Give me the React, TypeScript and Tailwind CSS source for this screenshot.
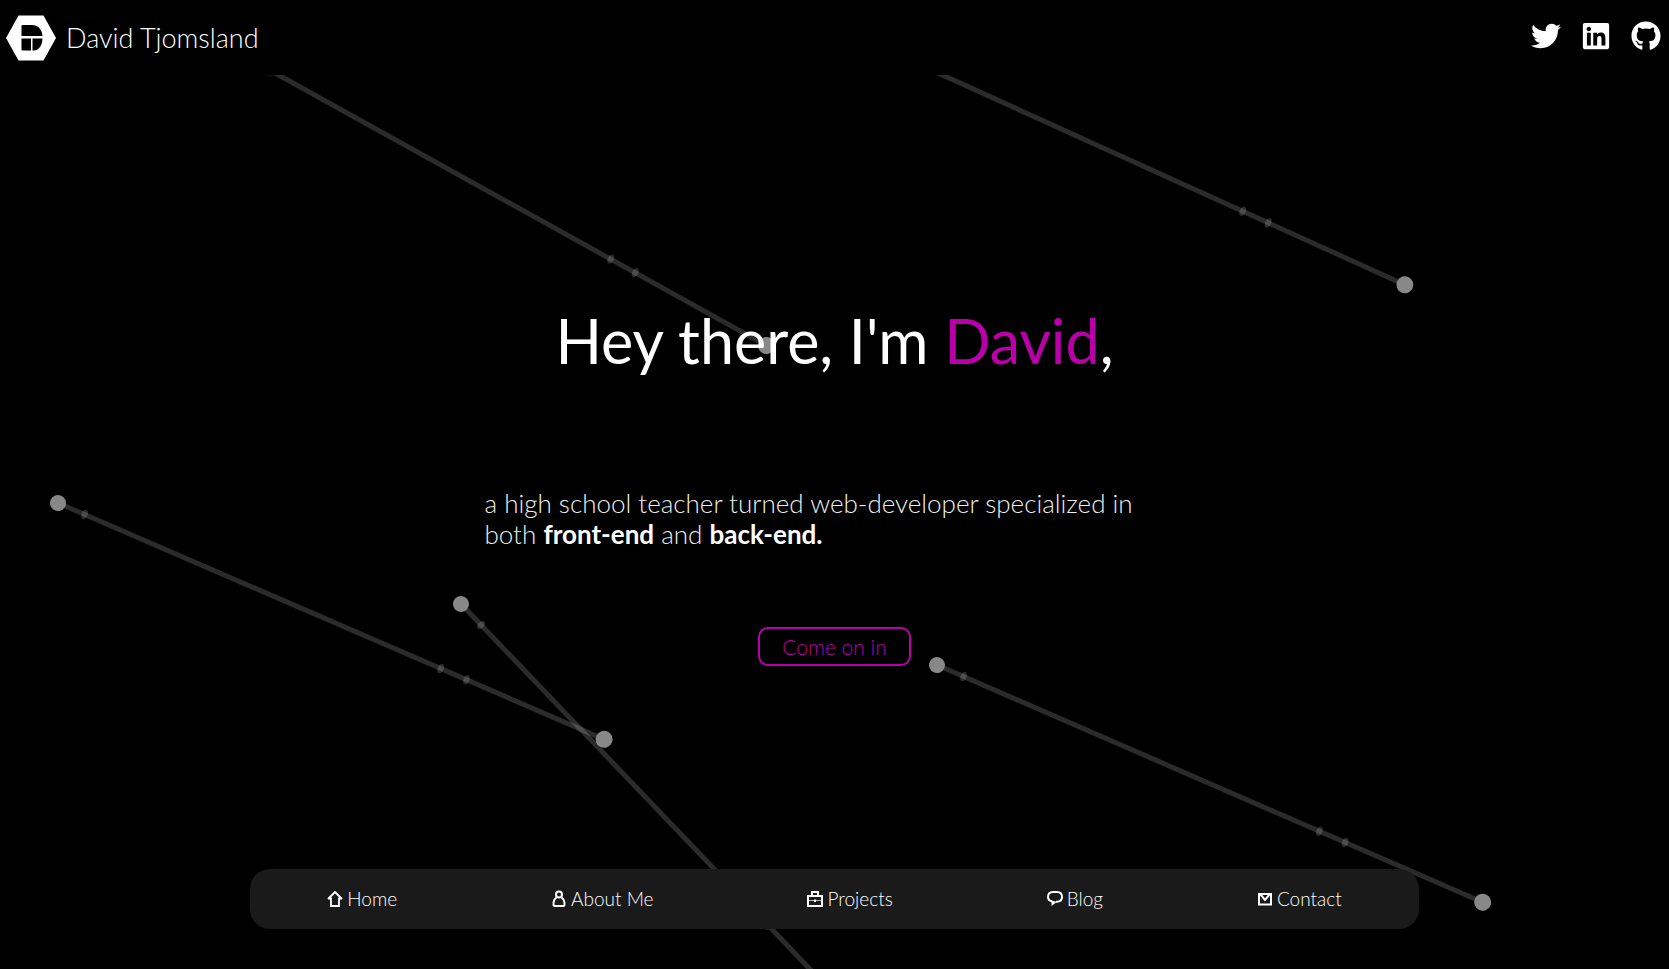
import type { ReactNode } from 'react';
import { FaTwitter, FaLinkedin, FaGithub } from 'react-icons/fa';

type RodProps = { x: number; y: number; angle: number };

const rods: RodProps[] = [
  { x: 246, y: 57, angle: 29 },
  { x: 863, y: 39, angle: 24.4 },
  { x: 58, y: 503, angle: 23.4 },
  { x: 461, y: 604, angle: 46.3 },
  { x: 937, y: 665, angle: 23.5 },
];

function Rod({ x, y, angle }: RodProps) {
  return (
    <g transform={`translate(${x} ${y}) rotate(${angle})`}>
      <line x1="7" y1="0" x2="587" y2="0" stroke="#fff" strokeOpacity="0.17" strokeWidth="5" />
      {[29, 417, 445].map((cx) => (
        <ellipse key={cx} cx={cx} cy="0" rx="3" ry="5" fill="#fff" fillOpacity="0.17" />
      ))}
      <circle cx="0" cy="0" r="8" fill="#888" />
      <circle cx="595" cy="0" r="8.5" fill="#888" />
    </g>
  );
}

function Logo() {
  return (
    <svg viewBox="0 0 50 46" className="h-[46px] w-[50px]" aria-hidden="true">
      <path d="M0 23 12.5 0.5h25L50 23 37.5 45.5h-25z" fill="#fff" />
      <path d="M16.5 10h9.5c6 0 10 4.500 10.500 11H15.500V11q0-1 1-1z" fill="#000" />
      <path d="M15.500 23.500H25V35.500h-8.500q-1 0-1-1z" fill="#000" />
      <path d="M26.500 23.500h10c-.3 7-3.500 11.500-8.500 12h-1.500z" fill="#000" />
    </svg>
  );
}

function Glyph({ children }: { children: ReactNode }) {
  return (
    <svg
      viewBox="0 0 16 18"
      className="h-[18px] w-4 shrink-0"
      fill="none"
      stroke="#fff"
      strokeWidth="2"
      aria-hidden="true"
    >
      {children}
    </svg>
  );
}

const links: { label: string; icon: ReactNode }[] = [
  {
    label: 'Home',
    icon: <path d="M1 9 8 2l7 7M1 8.500h3V16h8V8.500h3" strokeWidth="1.800" />,
  },
  {
    label: 'About Me',
    icon: (
      <>
        <circle cx="8" cy="4.500" r="3" />
        <path d="M5.500 7.500C3 9 2.500 11 2.500 14.200q0 1.800 1.500 1.800h8q1.500 0 1.500-1.800C13.500 11 13 9 10.500 7.500" />
      </>
    ),
  },
  {
    label: 'Projects',
    icon: (
      <>
        <path d="M1 6h14v10H1z" />
        <path d="M5 6V2h6v4" />
        <path d="M2 10.500h12" strokeWidth="1" strokeOpacity="0.700" />
        <path d="M8 9.500v2.500" />
      </>
    ),
  },
  {
    label: 'Blog',
    icon: (
      <>
        <path d="M5.500 11.500C2.500 11 1 9.300 1 7c0-3 2-5 5-5h4c3 0 5 2 5 5 0 3-2 4.700-5 4.700H9" />
        <path d="M4.500 10.800V16L10 11.800z" fill="#fff" stroke="none" />
      </>
    ),
  },
  {
    label: 'Contact',
    icon: (
      <>
        <path d="M2 4h12v10.500H2z" />
        <path d="M3.500 4.500 8 10l4.500-5.500" />
      </>
    ),
  },
];

export default function App() {
  return (
    <div className="relative isolate flex min-h-screen flex-col overflow-hidden bg-black font-['Lato','Open_Sans',sans-serif] font-light text-white">
      <svg
        viewBox="0 0 1669 969"
        preserveAspectRatio="xMidYMid slice"
        className="absolute inset-0 -z-10 h-full w-full"
        aria-hidden="true"
      >
        {rods.map((rod) => (
          <Rod key={rod.x} {...rod} />
        ))}
      </svg>

      <header className="flex h-[75px] items-center justify-between bg-black pr-2 pl-1.5">
        <a href="#home" className="flex items-center gap-2.5">
          <Logo />
          <span className="text-[27px] leading-8">David Tjomsland</span>
        </a>
        <div className="flex items-center gap-5 pb-1">
          <a href="#twitter" aria-label="Twitter"><FaTwitter className="size-[30px]" /></a>
          <a href="#linkedin" aria-label="LinkedIn"><FaLinkedin className="size-[30px]" /></a>
          <a href="#github" aria-label="GitHub"><FaGithub className="size-[30px]" /></a>
        </div>
      </header>

      <main className="flex flex-1 flex-col items-center pt-[227px]">
        <h1 className="text-[61px] leading-[78px] font-normal">
          Hey there, I'm <span className="text-[#b900a8]">David</span>,
        </h1>
        <p className="mt-[108px] w-[700px] max-w-full text-[26px] leading-[31px] text-[#eee]">
          a high school teacher turned web-developer specialized in both{' '}
          <strong className="font-bold text-white">front-end</strong> and{' '}
          <strong className="font-bold text-white">back-end.</strong>
        </p>
        <button
          type="button"
          className="mt-[77px] h-[39px] rounded-[10px] border-2 border-[#b900a8] px-[22px] text-[21px] leading-none text-[#b900a8]"
        >
          Come on in
        </button>
      </main>

      <nav className="mx-auto mb-10 flex h-[60px] w-[70%] items-center justify-around rounded-[20px] bg-[#1a1a1a]">
        {links.map(({ label, icon }) => (
          <a key={label} href={`#${label.toLowerCase().replace(' ', '-')}`} className="flex items-center gap-1">
            <Glyph>{icon}</Glyph>
            <span className="text-[19px] leading-7">{label}</span>
          </a>
        ))}
      </nav>
    </div>
  );
}
